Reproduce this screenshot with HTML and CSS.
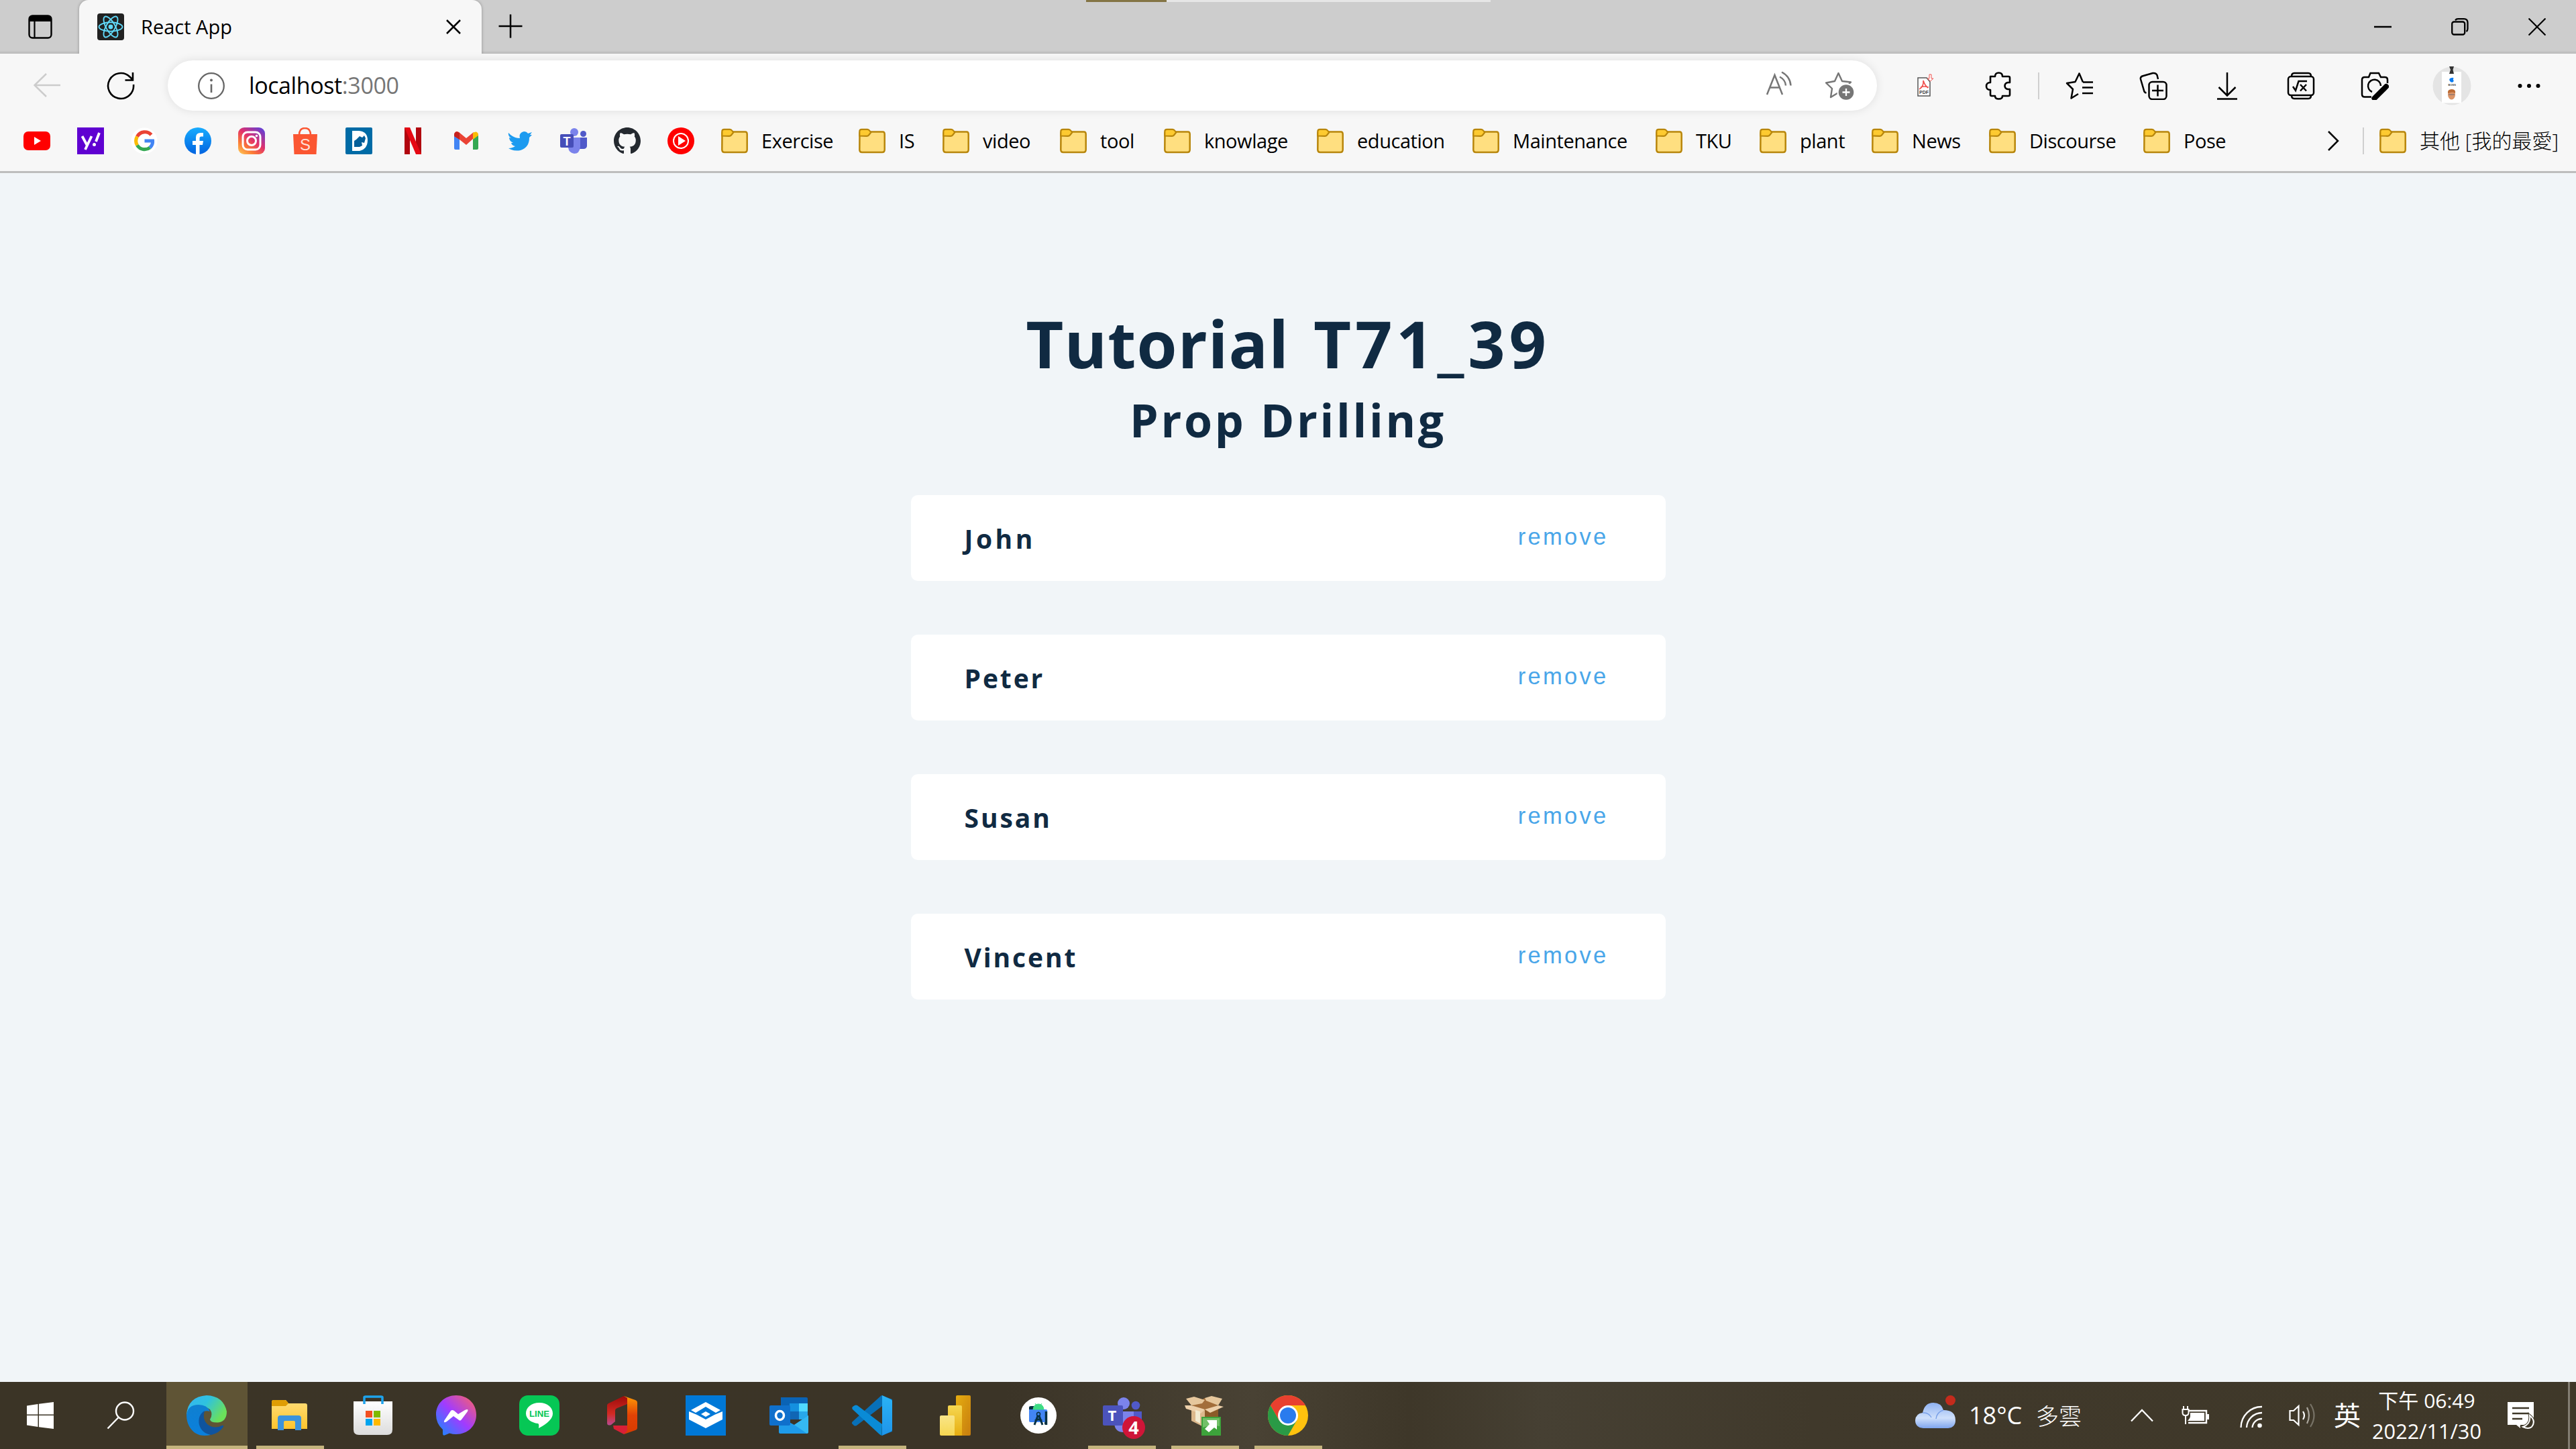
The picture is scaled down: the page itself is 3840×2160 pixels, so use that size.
FILE: index.html
```html
<!DOCTYPE html>
<html lang="zh-Hant">
<head>
<meta charset="utf-8">
<title>React App</title>
<link rel="stylesheet" href="styles.css">
</head>
<body>
<svg class="defs" width="0" height="0" aria-hidden="true">
  <defs>
    <symbol id="folder" viewBox="0 0 40 40">
      <path d="M1.5 9Q1.500 6.500 4 6.500H36Q38.700 6.500 38.700 10V33Q38.700 37 35 37H5Q1.300 37 1.300 33Z" fill="#ffdf80" stroke="#b8860b" stroke-width="2.500"/>
      <path d="M1.300 12.500V6Q1.300 2.800 4.500 2.800H13Q15 2.800 16.500 5L18.200 7.500L15 11.500Q14 12.800 12 12.800Z" fill="#fdca30" stroke="#b8860b" stroke-width="2.200"/>
    </symbol>
    <linearGradient id="ig" x1="0" y1="1" x2=".8" y2="0"><stop offset="0" stop-color="#ffd05a"/><stop offset=".3" stop-color="#fb7a35"/><stop offset=".6" stop-color="#e1306c"/><stop offset="1" stop-color="#6a3fd0"/></linearGradient>
    <linearGradient id="fb" x1="0" y1="0" x2="0" y2="1"><stop offset="0" stop-color="#18acfe"/><stop offset="1" stop-color="#0163e0"/></linearGradient>
    <linearGradient id="edgeA" x1="0" y1="0" x2="1" y2=".5"><stop offset="0" stop-color="#36b4f2"/><stop offset=".5" stop-color="#2fc2df"/><stop offset="1" stop-color="#6be05a"/></linearGradient>
    <linearGradient id="edgeB" x1="0" y1="0" x2="0" y2="1"><stop offset="0" stop-color="#0f7fd0"/><stop offset="1" stop-color="#0a80dd"/></linearGradient>
    <linearGradient id="msg" x1="0" y1="1" x2="1" y2="0"><stop offset="0" stop-color="#0a91ff"/><stop offset=".5" stop-color="#a13bff"/><stop offset="1" stop-color="#ff6560"/></linearGradient>
    <linearGradient id="fold" x1="0" y1="0" x2="0" y2="1"><stop offset="0" stop-color="#ffdd78"/><stop offset="1" stop-color="#fdc42c"/></linearGradient>
    <linearGradient id="bag" x1="0" y1="0" x2="0" y2="1"><stop offset="0" stop-color="#fff"/><stop offset="1" stop-color="#dcdcdc"/></linearGradient>
    <linearGradient id="offL" x1="0" y1="0" x2="0" y2="1"><stop offset="0" stop-color="#9d0b0b"/><stop offset=".6" stop-color="#d22a22"/><stop offset="1" stop-color="#b94a92"/></linearGradient>
    <linearGradient id="offR" x1="0" y1="0" x2="0" y2="1"><stop offset="0" stop-color="#ff9a05"/><stop offset=".5" stop-color="#e24205"/><stop offset="1" stop-color="#d83b01"/></linearGradient>
    <linearGradient id="vs" x1="0" y1="0" x2="0" y2="1"><stop offset="0" stop-color="#2ab3f6"/><stop offset="1" stop-color="#1f95ea"/></linearGradient>
    <linearGradient id="pb1" x1="0" y1="0" x2="1" y2="1"><stop offset="0" stop-color="#e6ad10"/><stop offset="1" stop-color="#c67d0f"/></linearGradient>
    <linearGradient id="pb2" x1="0" y1="0" x2="0" y2="1"><stop offset="0" stop-color="#f6d751"/><stop offset="1" stop-color="#e6ad10"/></linearGradient>
    <linearGradient id="pb3" x1="0" y1="0" x2="0" y2="1"><stop offset="0" stop-color="#f9e589"/><stop offset="1" stop-color="#f6d751"/></linearGradient>
    <linearGradient id="cloud" x1="0" y1="0" x2="0" y2="1"><stop offset="0" stop-color="#8fb2f2"/><stop offset=".6" stop-color="#cfe0fb"/><stop offset="1" stop-color="#7fa5ee"/></linearGradient>
  </defs>
</svg>

<header class="browser">
  <div class="tabstrip">
    <div class="tab-actions">
      <svg class="ic" width="40" height="40" viewBox="0 0 40 40"><rect x="3.500" y="3.500" width="33" height="33" rx="5" fill="none" stroke="#000" stroke-width="2.400"/><path d="M3 12V8Q3 3 8 3H32Q37 3 37 8V12Z"/><path d="M11.500 12V36" stroke="#000" stroke-width="2.200"/></svg>
    </div>
    <div class="tab">
      <svg class="favicon" width="40" height="40" viewBox="0 0 40 40"><rect width="40" height="40" rx="4" fill="#222"/><g fill="none" stroke="#61dafb" stroke-width="1.900"><ellipse cx="20" cy="20" rx="17.500" ry="6.700"/><ellipse cx="20" cy="20" rx="17.500" ry="6.700" transform="rotate(60 20 20)"/><ellipse cx="20" cy="20" rx="17.500" ry="6.700" transform="rotate(120 20 20)"/></g><circle cx="20" cy="20" r="3.400" fill="#61dafb"/></svg>
      <span class="tab-title">React App</span>
      <svg class="tab-close" width="24" height="24" viewBox="0 0 24 24"><path d="M2 2L22 22M22 2L2 22" stroke="#000" stroke-width="2.500"/></svg>
    </div>
    <svg class="new-tab" width="36" height="36" viewBox="0 0 36 36"><path d="M18 .500V35.500M.500 18H35.500" stroke="#000" stroke-width="2.500"/></svg>
    <div class="window-controls">
      <svg width="26" height="26" viewBox="0 0 26 26"><path d="M0 13H26" stroke="#000" stroke-width="2.500"/></svg>
      <svg width="26" height="26" viewBox="0 0 26 26" fill="none" stroke="#000" stroke-width="2.300"><rect x="1.200" y="5.500" width="19" height="19" rx="3"/><path d="M6 3.200Q7.500 1.200 10 1.200H19Q24.500 1.200 24.500 7V16Q24.500 18.500 22.500 20"/></svg>
      <svg width="26" height="26" viewBox="0 0 26 26"><path d="M.500 .500L25.500 25.500M25.500 .500L.500 25.500" stroke="#000" stroke-width="2.200"/></svg>
    </div>
    <div class="strip"><i class="strip-on"></i><i class="strip-off"></i></div>
  </div>

  <div class="toolbar">
    <div class="cell"><svg width="40" height="40" viewBox="0 0 40 40" fill="none" stroke="#ccc" stroke-width="2.500"><path d="M40 19H1.500M19 2L1.500 19L19 36"/></svg></div>
    <div class="cell"><svg width="42" height="42" viewBox="0 0 42 42" fill="none" stroke="#000" stroke-width="2.600"><path d="M40 19A19 19 0 1 1 34.500 7.500L39 12M39 1V12.500H27.500"/></svg></div>
    <div class="address">
      <svg width="40" height="40" viewBox="0 0 40 40" fill="none" stroke="#666" stroke-width="2.300"><circle cx="20" cy="20" r="18.800"/><path d="M20 17.500V30" stroke-width="2.600"/><circle cx="20" cy="11.500" r="2" fill="#666" stroke="none"/></svg>
      <span class="url">localhost<span class="port">:3000</span></span>
      <svg class="read" width="40" height="40" viewBox="0 0 40 40" fill="none" stroke="#767676" stroke-width="2.500"><path d="M2 35L13.500 6L25 35M6.500 24.500H20.500M21 8.500Q29.500 13 30 21.500M24 1.500Q36.500 8 37.500 21.500"/></svg>
      <svg width="44" height="44" viewBox="0 0 44 44"><path d="M20.500 3L26 15L39 16.500L30 25L32 38L20.500 32L9 39L11 26L2 17.500L15 15Z" fill="none" stroke="#767676" stroke-width="2.400" stroke-linejoin="round"/><circle cx="32" cy="31.500" r="13.500" fill="#fff"/><circle cx="32" cy="31.500" r="11.300" fill="#767676"/><path d="M32 26V37M26.500 31.500H37.500" stroke="#fff" stroke-width="2.300"/></svg>
    </div>
    <div class="cell pdf"><svg width="28" height="36" viewBox="0 0 28 36"><path d="M2 6H15L20 12V33H2Z" fill="#fff" stroke="#555" stroke-width="1.500"/><path d="M10 10Q12 17 17 21M10 10Q11 19 4 23M6 20Q11 18 18 20" fill="none" stroke="#f0524f" stroke-width="1.700"/><path d="M22 1V7H25L20.500 11L16.500 7H19V1Z" fill="#fff" stroke="#f0524f"/><text x="4" y="30" font-family="Liberation Sans" font-size="7" font-weight="700" fill="#444">PDF</text></svg></div>
    <div class="cell"><svg width="40" height="42" viewBox="0 0 40 42" fill="none" stroke="#000" stroke-width="2.600" stroke-linejoin="round"><path d="M8 7H15Q15 1.500 20.500 1.500Q26 1.500 26 7H35Q37 7 37 9V16H34Q29.500 17 29.500 21Q29.500 25 34 26H37V34Q37 36 35 36H26Q26 40.500 20.500 40.500Q15 40.500 15 36H10Q8 36 8 34V27Q2 27 2 21.500Q2 16 8 16Z"/></svg></div>
    <i class="sep"></i>
    <div class="cell"><svg width="42" height="42" viewBox="0 0 42 42" fill="none" stroke="#000" stroke-width="2.500" stroke-linejoin="round"><path d="M26 15.500L20.500 2.500L14.500 15L2 17L11 26L8.500 39.500L19 33M26 15.500H41M25 23.500H41M25 32H41"/></svg></div>
    <div class="cell"><svg width="42" height="42" viewBox="0 0 42 42" fill="none" stroke="#000" stroke-width="2.500"><rect x="14.500" y="15" width="26" height="26" rx="5"/><path d="M27.500 19.500V36.500M19 28H36M10.500 31.500Q7.500 31 7 28L2 11Q1.300 8 4.500 6.500L20 2Q25 1.300 26.500 5L28 11"/></svg></div>
    <div class="cell"><svg width="42" height="42" viewBox="0 0 42 42" fill="none" stroke="#000" stroke-width="2.500"><path d="M21 1V35M8.500 23L21 35.500L33.500 23M6 40.500H36"/></svg></div>
    <div class="cell"><svg width="42" height="42" viewBox="0 0 42 42" fill="none" stroke="#000" stroke-width="2.500"><rect x="2" y="7" width="38" height="28" rx="4"/><path d="M7 7Q7 2 11 2H32Q36 2 36 7M7 35Q7 40 11 40H32Q36 40 36 35M9 22L13 28L17.500 14H30M20 19L29 28.500M29 19L20 28.500"/></svg></div>
    <div class="cell"><svg width="42" height="42" viewBox="0 0 42 42" fill="none" stroke="#000" stroke-width="2.500"><path d="M16 37.500H6Q2 37.500 2 33.500V12Q2 8 6 8H12L14.500 2H27L30 8H36Q40 8 40 12V17"/><path d="M17 30A9.500 9.500 0 1 1 30 21"/><path d="M38 22L23 37L20.500 39.500" stroke-width="8" stroke-linecap="round"/></svg></div>
    <div class="cell profile"><svg width="58" height="58" viewBox="0 0 58 58"><circle cx="29" cy="29" r="28.500" fill="#e4e4e4"/><path d="M14 8H43V54.500H14Z" fill="#fff"/><path d="M25 0H32L30.500 5L32 11H25L27 5Z" fill="#333"/><path d="M29 17Q31 16 31.500 18Q30 20 32 21.500Q30 25 27 23Q24 20 26 18Q28 17 29 17Z" fill="#087bf0"/><text x="23.500" y="29" font-family="Liberation Sans" font-size="4" font-weight="700" fill="#444">BOSS</text><ellipse cx="28.500" cy="42" rx="5.500" ry="7.500" fill="#db9568"/><path d="M23 40Q22 34 29 34Q35 34 34 40Q31 37 23 40Z" fill="#bd6c35"/><path d="M24 42H33" stroke="#6c6670"/></svg></div>
    <div class="cell more"><svg width="36" height="8" viewBox="0 0 36 8"><circle cx="4.500" cy="4" r="3"/><circle cx="18" cy="4" r="3"/><circle cx="31.500" cy="4" r="3"/></svg></div>
  </div>

  <nav class="bookmarks">
    <svg class="bi" viewBox="0 0 40 40"><rect y="6" width="40" height="28" rx="7" fill="#f00"/><path d="M16 14L26 20L16 26Z" fill="#fff"/></svg>
    <svg class="bi" viewBox="0 0 40 40"><rect width="40" height="40" fill="#5f01d1"/><g fill="none" stroke="#fff" stroke-width="3.800"><path d="M7.500 13L14.500 26M21.500 13L12 33M33 8L28 21"/></g><circle cx="25.500" cy="25.500" r="2.500" fill="#fff"/></svg>
    <svg class="bi" viewBox="0 0 40 40"><circle cx="20" cy="20" r="19.500" fill="#fff"/><g fill="none" stroke-width="5.200"><path d="M30.500 11A13 13 0 0 0 9.500 13.500" stroke="#ea4335"/><path d="M9.500 13.500A13 13 0 0 0 9.500 26.500" stroke="#fbbc05"/><path d="M9.500 26.500A13 13 0 0 0 28.500 30" stroke="#34a853"/><path d="M28.500 30Q33 26 32.500 20H20.500" stroke="#4285f4"/></g></svg>
    <svg class="bi" viewBox="0 0 40 40"><circle cx="20" cy="20" r="20" fill="url(#fb)"/><path d="M17 40V26H12V20H17V15Q17 8 24 8H28V13.500H25Q22.500 13.500 22.500 16V20H28L27 26H22.500V40Z" fill="#fff"/></svg>
    <svg class="bi" viewBox="0 0 40 40"><rect width="40" height="40" rx="9" fill="url(#ig)"/><g fill="none" stroke="#fff" stroke-width="3"><rect x="7" y="7" width="26" height="26" rx="7"/><circle cx="20" cy="20" r="6.500"/></g><circle cx="27.500" cy="12.500" r="1.800" fill="#fff"/></svg>
    <svg class="bi" viewBox="0 0 40 40"><path d="M2 10H38L36.500 40H3.500Z" fill="#fb5632"/><path d="M11 11Q11 1 19.500 1Q28 1 28 11" fill="none" stroke="#fb5632" stroke-width="2.500"/><text x="12" y="34" font-family="Liberation Sans" font-size="24" fill="#ffe0d8">S</text></svg>
    <svg class="bi" viewBox="0 0 40 40"><rect width="40" height="40" rx="2" fill="#006ba6"/><path d="M10 5H20Q33 6 33 19Q33 32 21 35H10Z" fill="#fff"/><path d="M13 20L16 18L21 13L25 15L28 12L30 16L28 23L24 22L25 27L21 29H13Z" fill="#045f99"/></svg>
    <svg class="bi" viewBox="0 0 40 40"><path d="M8 0H16V40H8ZM25 0H33V40H25Z" fill="#b1060f"/><path d="M8 0H16L33 40H25Z" fill="#e50914"/></svg>
    <svg class="bi" viewBox="0 0 40 40"><path d="M2 12L10 17V33H4Q2 33 2 31Z" fill="#4285f4"/><path d="M30 17L38 11V31Q38 33 36 33H30Z" fill="#34a853"/><path d="M2 13V10Q4 4 9 7L20 16L31 7L30 17L20 26L10 18Z" fill="#ea4335"/><path d="M2 10Q4 4 10 8V18L2 13Z" fill="#c5221f"/><path d="M30 8Q36 4 38 10V12L30 18Z" fill="#fbbc04"/></svg>
    <svg class="bi" viewBox="0 0 40 40"><path d="M3 8Q10 16 20 16Q18 8 26 6Q30 6 32 9L38 7L35 11L38 11L34 15Q34 30 21 34Q11 36 3 31Q9 31 13 28Q8 27 7 23H10Q4 20 4 15L7 16Q2 13 3 8Z" fill="#1d9bf0"/></svg>
    <svg class="bi" viewBox="0 0 40 40"><circle cx="21" cy="7" r="6" fill="#7b83eb"/><circle cx="34.500" cy="9.500" r="4.500" fill="#5059c9"/><path d="M28 15H40V28Q39 32 35 32H28Z" fill="#5059c9"/><path d="M12 15H30V29Q29 39 21 39Q13 38 12 30Z" fill="#7b83eb"/><rect y="10" width="20" height="20" rx="2" fill="#464eb8"/><text x="4.500" y="26.500" font-family="Liberation Sans" font-size="18" font-weight="700" fill="#fff">T</text></svg>
    <svg class="bi" viewBox="0 0 16 16"><path fill="#24292f" d="M8 0C3.580 0 0 3.580 0 8c0 3.540 2.290 6.530 5.470 7.590.4.070.55-.17.55-.38 0-.19-.01-.82-.01-1.490-2.010.37-2.530-.49-2.690-.94-.09-.23-.48-.94-.82-1.130-.28-.15-.68-.52-.01-.53.63-.01 1.080.58 1.230.82.72 1.210 1.870.87 2.330.66.070-.52.28-.87.51-1.070-1.780-.2-3.640-.89-3.640-3.950 0-.87.31-1.590.82-2.150-.08-.2-.36-1.020.08-2.120 0 0 .67-.21 2.200.82.64-.18 1.320-.27 2-.27s1.360.09 2 .27c1.530-1.040 2.200-.82 2.200-.82.44 1.100.16 1.920.08 2.120.51.56.82 1.270.82 2.150 0 3.070-1.870 3.750-3.650 3.950.29.25.54.73.54 1.480 0 1.070-.01 1.930-.01 2.200 0 .21.15.46.55.38A8.010 8.010 0 0 0 16 8c0-4.420-3.580-8-8-8z"/></svg>
    <svg class="bi" viewBox="0 0 40 40"><circle cx="20" cy="20" r="20" fill="#f00"/><circle cx="20" cy="20" r="11" fill="none" stroke="#fff" stroke-width="2"/><path d="M16 13L27 20L16 27Z" fill="#fff"/></svg>
    <a class="bm" style="width:165px"><svg class="bi"><use href="#folder"/></svg>Exercise</a>
    <a class="bm" style="width:85px"><svg class="bi"><use href="#folder"/></svg>IS</a>
    <a class="bm" style="width:135px"><svg class="bi"><use href="#folder"/></svg>video</a>
    <a class="bm" style="width:115px"><svg class="bi"><use href="#folder"/></svg>tool</a>
    <a class="bm" style="width:188px"><svg class="bi"><use href="#folder"/></svg>knowlage</a>
    <a class="bm" style="width:192px"><svg class="bi"><use href="#folder"/></svg>education</a>
    <a class="bm" style="width:233px"><svg class="bi"><use href="#folder"/></svg>Maintenance</a>
    <a class="bm" style="width:115px"><svg class="bi"><use href="#folder"/></svg>TKU</a>
    <a class="bm" style="width:127px"><svg class="bi"><use href="#folder"/></svg>plant</a>
    <a class="bm" style="width:135px"><svg class="bi"><use href="#folder"/></svg>News</a>
    <a class="bm" style="width:190px"><svg class="bi"><use href="#folder"/></svg>Discourse</a>
    <a class="bm" style="width:125px"><svg class="bi"><use href="#folder"/></svg>Pose</a>
    <div class="bm-end">
      <svg width="18" height="30" viewBox="0 0 18 30" fill="none" stroke="#000" stroke-width="2.500"><path d="M2 1L16 15L2 29"/></svg>
      <i class="sep"></i>
      <a class="bm others"><svg class="bi"><use href="#folder"/></svg>其他 [我的最愛]</a>
    </div>
  </nav>
</header>

<main class="page">
  <h1><span class="word-a">Tutorial</span> <span class="word-b">T71_39</span></h1>
  <h2>Prop Drilling</h2>
  <section class="people">
    <article class="item"><h4 class="loose">John</h4><button>remove</button></article>
    <article class="item"><h4>Peter</h4><button>remove</button></article>
    <article class="item"><h4>Susan</h4><button>remove</button></article>
    <article class="item"><h4>Vincent</h4><button>remove</button></article>
  </section>
</main>

<footer class="taskbar">
  <div class="sys"><svg width="40" height="40" viewBox="0 0 40 40" fill="#fff"><path d="M0 5.500L16.500 3V18.500H0ZM18 2.700L40 0V18.500H18ZM0 20H16.500V37L0 34.500ZM18 20H40V40L18 37.300Z"/></svg></div>
  <div class="sys"><svg width="42" height="42" viewBox="0 0 42 42" fill="none" stroke="#fff" stroke-width="2.400"><circle cx="27" cy="14.500" r="13"/><path d="M17.500 24L1.500 40.500"/></svg></div>
  <div class="app active"><svg viewBox="0 0 60 60"><path d="M0 29Q2 2 30 0Q55 1 60 24Q60 39 47 40.500Q36 41 35 36Q40 28 35 21Q20 10 0 29Z" fill="url(#edgeA)"/><path d="M0 29Q2 14 18 14Q31 14 35 24Q26 21 22 29Q16 48 36 59Q14 64 4 46Q0 39 0 29Z" fill="url(#edgeB)"/><path d="M27 23Q16 30 19 44Q23 57 37 59Q49 56 55 47Q56 44 53 45Q41 51 31 43Q23 35 27 23Z" fill="#10549e"/></svg></div>
  <div class="app open"><svg viewBox="0 0 60 60"><path d="M3 11Q3 7 6 7H24L28 12H53Q56 12 56 15V50H3Z" fill="url(#fold)"/><path d="M3 9Q3 7 6 7H22Q25 7 28 12L24 16H3Z" fill="#df9d04"/><path d="M12 52V34Q12 30 16 30H43Q47 30 47 34V52H38V40Q38 38 36 38H23Q21 38 21 40V52Z" fill="#3b93dc"/></svg></div>
  <div class="app"><svg viewBox="0 0 60 60"><path d="M17 12V3Q17 2 19 2H42Q44 2 44 3V12" fill="none" stroke="#1ea3ec" stroke-width="3.500"/><path d="M1 9H59V51Q59 59 51 59H9Q1 59 1 51Z" fill="url(#bag)"/><path d="M17 9V13M44 9V13" stroke="#1ea3ec" stroke-width="3.500"/><path d="M19 23H29V33H19Z" fill="#f25022"/><path d="M31 23H41V33H31Z" fill="#7fba00"/><path d="M19 35H29V45H19Z" fill="#00a4ef"/><path d="M31 35H41V45H31Z" fill="#ffb900"/></svg></div>
  <div class="app"><svg viewBox="0 0 60 60"><path d="M30 0C13 0 0 12 0 29Q0 42 10 51V57Q10 61 14 59L20 56.500Q25 58 30 58C47 58 60 46 60 29C60 12 47 0 30 0Z" fill="url(#msg)"/><path d="M12 38L22 23Q24 21 27 23L33 28L43 22Q49 19 47 24L38 36Q36 39 33 36L26 31L16 39Q11 42 12 38Z" fill="#fff"/></svg></div>
  <div class="app"><svg viewBox="0 0 60 60"><rect width="60" height="60" rx="13" fill="#06c755"/><path d="M30 11C18 11 10 18 10 27C10 35 18 41 28 42Q30 43 29 49Q50 38 50 27C50 18 42 11 30 11Z" fill="#fff"/><text x="15" y="32" textLength="30" lengthAdjust="spacingAndGlyphs" font-family="Liberation Sans" font-size="13" font-weight="700" fill="#06c755">LINE</text></svg></div>
  <div class="app"><svg viewBox="0 0 60 60"><path d="M32 1L37 4V13L22 19Q19 20 19 23V39L13 44Q7 46 7 41V15Q7 13 9 12Z" fill="url(#offL)"/><path d="M32 1L49 7Q52 8 52 11V48Q52 51 49 52L32 58L37 50V4Z" fill="url(#offR)"/><path d="M16 45H37V53L32 58L17 50Z" fill="#d92036"/></svg></div>
  <div class="app"><svg viewBox="0 0 60 60"><rect width="60" height="60" fill="#0078d7"/><path d="M30 10L52 22L45 26L30 17L15 26L8 22Z" fill="#fff"/><path d="M5 24L17 29L30 36L43 29L55 24V36L30 49L5 36Z" fill="#fff"/><path d="M23 28L30 24L37 28L30 32Z" fill="#fff"/></svg></div>
  <div class="app"><svg viewBox="0 0 60 60"><path d="M18 3H56Q58 3 58 5V30H18Z" fill="#0a63b5"/><path d="M31 12H45V24H31Z" fill="#1490df"/><path d="M45 12H58V24H45Z" fill="#50d9ff"/><path d="M31 24H45V36H31Z" fill="#1066b5"/><path d="M45 24H58V36H45Z" fill="#28a8ea"/><path d="M15 32L38 44L59 30V55Q59 57 57 57H17Q15 57 15 55Z" fill="#1e9bea"/><path d="M38 44L59 30V55L57 57Z" fill="#35b8f1"/><rect x="1" y="15" width="31" height="30" rx="2" fill="#0f70cc"/><ellipse cx="16.500" cy="30" rx="6" ry="6.500" fill="none" stroke="#fff" stroke-width="3.500"/></svg></div>
  <div class="app open"><svg viewBox="0 0 60 60"><path d="M44 0L60 6V54L44 60L45 44V16L7 45Q5 46 3 45L0 42Q-.500 40 1 39Z" fill="#0870b8"/><path d="M1 21Q-.500 19 1 17L4 15Q6 14 8 15L45 43L44 60L41 58Z" fill="#0a8bd6"/><path d="M45 0L58 6Q60 7 60 9V51Q60 53 58 54L45 60Z" fill="url(#vs)"/></svg></div>
  <div class="app"><svg viewBox="0 0 60 60"><rect x="31" width="22" height="60" rx="2" fill="url(#pb1)"/><path d="M19 17Q19 15 21 15H38Q40 15 40 17V60H19Z" fill="url(#pb2)"/><path d="M7 32Q7 30 9 30H27Q29 30 29 32V60H9Q7 60 7 58Z" fill="url(#pb3)"/></svg></div>
  <div class="app"><svg viewBox="0 0 60 60"><circle cx="30" cy="30" r="27" fill="#fff"/><path d="M16 18Q16 16 19 16H25V22H16ZM39 22H43V43Q42 45 39 43Z" fill="#073042"/><path d="M16 21H41Q44 21 43 25V38Q43 40 41 40H18Q16 40 16 38Z" fill="#4285f4"/><path d="M22 21Q23 13 30 13Q37 13 38 21ZM25 12L27 15M35 12L33 15" fill="#3ddc84" stroke="#3ddc84"/><path d="M24 44L30 28L36 44M25 38Q30 34 35 38" fill="none" stroke="#073042" stroke-width="3"/><circle cx="30" cy="28" r="2.500" fill="#4285f4" stroke="#073042" stroke-width="1.500"/><path d="M41.500 24V44" stroke="#073042" stroke-width="3.500"/></svg></div>
  <div class="app open"><svg viewBox="0 0 60 60"><circle cx="33" cy="12" r="9" fill="#7b83eb"/><circle cx="51" cy="15" r="6.300" fill="#5059c9"/><path d="M44 24H60V42H44Z" fill="#5059c9"/><path d="M20 24H48V42Q46 55 33 55Q20 55 19 42Z" fill="#7b83eb"/><rect x="2" y="15" width="30" height="30" rx="2" fill="#4b53bc"/><text x="9.500" y="37.500" font-family="Open Sans" font-size="22" font-weight="700" fill="#fff">T</text></svg><span class="badge">4</span></div>
  <div class="app open"><svg viewBox="0 0 60 60"><path d="M10 16L30 22V48L10 38Z" fill="#dcb88c"/><path d="M30 20L50 16V38L30 48Z" fill="#8b5a28"/><path d="M10 15L30 4L50 15L30 22Z" fill="#a36e3a"/><path d="M10 15L2 5L14 2L30 7L26 12ZM30 4L40 1L56 5L50 15L32 8Z" fill="#e6c79c"/><path d="M0 15L10 15L30 21L24 27L2 20ZM30 21L50 15L58 17L38 26Z" fill="#edd0aa"/><path d="M16 22L23 24V42L16 38Z" fill="#f2ebd2"/><rect x="25" y="32" width="29" height="28" fill="#3da33b"/><path d="M27 34H52V46Q39 43 27 48Z" fill="#72bf68"/><path d="M33 37H48V51L44 48L36 55L30 50L37 43Z" fill="#fff"/></svg></div>
  <div class="app open"><svg viewBox="0 0 60 60"><circle cx="30" cy="30" r="30" fill="#ffc20e"/><path d="M4 15A30 30 0 0 1 56 15H30L30 30Z" fill="#e8402f"/><path d="M4 15A30 30 0 0 0 30 60L43 37.500L30 30L17 37.500Z" fill="#2a9a46"/><path d="M4 15L17 37.500L30 30V15L20 5Z" fill="#e8402f"/><circle cx="30" cy="30" r="15" fill="#fff"/><circle cx="30" cy="30" r="12" fill="#2a7bee"/></svg></div>

  <div class="tray">
    <svg class="weather" width="62" height="60" viewBox="0 0 62 60"><path d="M12 49Q0 48 0 37Q1 27 11 26Q14 11 27 11Q39 11 42 22Q60 22 60 37Q60 48 49 49Z" fill="url(#cloud)"/><path d="M11 26Q20 25 24 33M42 22Q32 25 31 35" fill="none" stroke="#79a0e8" stroke-width="1.500"/><circle cx="52.500" cy="7.500" r="7.500" fill="#c42b1c"/></svg>
    <span class="temp">18°C</span>
    <span class="cond">多雲</span>
    <div class="ti"><svg width="34" height="20" viewBox="0 0 34 20" fill="none" stroke="#fff" stroke-width="2.300"><path d="M1 18.500L17 2L33 18.500"/></svg></div>
    <div class="ti"><svg width="42" height="30" viewBox="0 0 42 30"><path d="M10 8H37V26H10" fill="none" stroke="#fff" stroke-width="2.400"/><path d="M13 11H34V23H9Q13 19 13 16ZM38 13H41V21H38Z" fill="#fff"/><path d="M3 1V6M9 1V6M1.500 6H10.500V11Q10.500 15 6 15Q1.500 15 1.500 11ZM6 15V28" fill="none" stroke="#fff" stroke-width="2"/></svg></div>
    <div class="ti wifi"><svg width="34" height="34" viewBox="0 0 34 34" fill="none" stroke="#fff" stroke-width="2.300"><path d="M1.500 33A31 31 0 0 1 33 2M10 33A23 23 0 0 1 33 11M18.500 33A14 14 0 0 1 33 20"/><circle cx="29.500" cy="30" r="3.300" fill="#fff" stroke="none"/></svg></div>
    <div class="ti"><svg width="42" height="38" viewBox="0 0 42 38" fill="none" stroke="#fff" stroke-width="2.200"><path d="M1.500 12V26H7L14.500 33V5L7 12ZM21 13Q25 19 21 25"/><path d="M27 7Q33 19 27 31" stroke="#aaa69d"/><path d="M32 2Q43 19 32 36" stroke="#777266"/></svg></div>
    <span class="ime">英</span>
    <div class="clock"><span class="time">下午 06:49</span><span>2022/11/30</span></div>
    <div class="ti"><svg width="42" height="42" viewBox="0 0 42 42"><path d="M1 1H40V35H20V40L14 35H1Z" fill="#fff"/><path d="M8 10H33M8 18H33M8 26H23" stroke="#3f3829" stroke-width="2.300"/><path d="M34 21Q44 29 37 38Q32 42 24 38Q36 34 34 21Z" fill="#fff" stroke="#3f3829" stroke-width="4"/><path d="M34 21Q44 29 37 38Q32 42 24 38Q36 34 34 21Z" fill="#3f3829" stroke="#fff" stroke-width="2"/></svg></div>
    <i class="desk"></i>
  </div>
</footer>
</body>
</html>
```
FILE: styles.css
```css
* { box-sizing: border-box; }
html, body { margin: 0; }
body {
  width: 3840px;
  height: 2160px;
  overflow: hidden;
  display: flex;
  flex-direction: column;
  background: #f1f5f8;
  font-family: "Open Sans", "Noto Sans CJK TC", sans-serif;
  color: #000;
}
svg { display: block; flex: none; }
.defs { position: absolute; }

.browser { height: 258px; background: #f7f7f7; border-bottom: 3px solid #bdbdbd; }

.tabstrip {
  position: relative;
  display: flex;
  align-items: center;
  height: 80px;
  background: linear-gradient(#cdcdcd 75px, #b9b9b9);
}
.tab-actions { width: 118px; padding-left: 40px; }
.tab {
  display: flex;
  align-items: center;
  width: 600px;
  height: 80px;
  padding: 0 30px 0 27px;
  border-radius: 14px 14px 0 0;
  background: #f7f7f7;
  box-shadow: 0 0 4px rgba(0, 0, 0, .3);
}
.tab-title { margin-left: 25px; padding-bottom: 2px; font-size: 29px; }
.tab-close { margin-left: auto; }
.new-tab { margin: 0 0 2px 25px; }
.window-controls { display: flex; gap: 89px; margin: 0 45px 0 auto; }
.strip { position: absolute; left: 1619px; top: 0; display: flex; }
.strip i { height: 3px; }
.strip-on { width: 120px; background: #847545; }
.strip-off { width: 483px; background: #e6e6e6; }

.toolbar {
  position: relative;
  display: flex;
  align-items: center;
  height: 95px;
  padding-left: 15px;
  background: #f7f7f7;
}
.cell { display: flex; justify-content: center; width: 110px; flex: none; }
.cell.pdf { margin-left: 16px; padding-left: 4px; }
.cell.profile { margin-left: 5px; }
.cell.more { margin-left: 5px; }
.sep { width: 2px; height: 40px; background: #cfcfcf; }
.toolbar .sep { margin: 0 5px 0 4px; }
.address {
  display: flex;
  align-items: center;
  width: 2548px;
  height: 75px;
  margin-left: 15px;
  padding: 0 34px 0 45px;
  border-radius: 38px;
  background: #fff;
  box-shadow: 0 0 14px rgba(0, 0, 0, .1);
}
.url { margin-left: 36px; padding-bottom: 1px; font-size: 34px; letter-spacing: -.4px; }
.port { color: #767676; }
.read { margin: 0 48px 4px auto; }

.bookmarks { position: relative; display: flex; align-items: center; gap: 40px; height: 70px; padding-left: 35px; }
.bi { width: 40px; height: 40px; }
.bm {
  display: flex;
  align-items: center;
  gap: 20px;
  font-size: 29px;
  line-height: 40px;
  letter-spacing: -.45px;
  white-space: nowrap;
}
.bm-end { display: flex; align-items: center; margin: 0 26px 0 auto; }
.bm-end .sep { margin: 0 23px 0 35px; }
.others { font-size: 30px; font-weight: 300; letter-spacing: 0; }

.page { flex: 1; padding-top: 203px; text-align: center; color: #102a42; }
h1, h2, h4 { margin: 0; font-weight: 700; }
h1 { font-size: 97px; line-height: 100px; letter-spacing: 4px; word-spacing: 7px; }
.word-a { letter-spacing: 1.1px; }
.word-b { letter-spacing: 5.8px; }
h2 { margin-top: 25px; font-size: 68px; line-height: 80px; letter-spacing: 3.7px; }
.people { display: flex; flex-direction: column; gap: 80px; width: 1125px; margin: 72px auto 0; }
.item {
  display: flex;
  align-items: center;
  justify-content: space-between;
  height: 128px;
  padding: 0 85px 0 80px;
  border-radius: 10px;
  background: #fff;
}
.item h4 { padding-top: 2px; font-size: 39px; line-height: 56px; letter-spacing: 2.9px; }
.item .loose { letter-spacing: 4.5px; }
.item button {
  padding: 0 0 3px;
  border: 0;
  background: none;
  font: 34.5px "Liberation Sans", sans-serif;
  letter-spacing: 3.3px;
  color: #49a6e9;
}

.taskbar {
  display: flex;
  height: 100px;
  background: linear-gradient(90deg, #3b3426 0, #3b3427 1500px, #494234 1870px, #3e3729 2100px, #464033 2300px, #40392b 2700px, #3f3829 100%);
}
.sys { display: flex; align-items: center; justify-content: center; width: 120px; }
.sys + .sys { width: 126px; padding-right: 6px; }
.app {
  position: relative;
  display: flex;
  align-items: center;
  justify-content: center;
  width: 124px;
  height: 100px;
}
.app svg { width: 60px; height: 60px; overflow: visible; }
.app.active { width: 121px; margin: 0 1px 0 2px; padding-right: 2px; background: #5f5435; }
.app.active::after, .app.open::after {
  content: "";
  position: absolute;
  bottom: 0;
  left: 0;
  width: 100%;
  height: 5px;
  background: #c5b47d;
}
.app.open::after { left: 12px; width: 101px; }
.badge {
  position: absolute;
  left: 63px;
  top: 51px;
  width: 34px;
  height: 34px;
  border-radius: 50%;
  background: #cf1538;
  color: #fff;
  font-size: 27px;
  font-weight: 700;
  line-height: 33px;
  text-align: center;
}
.tray {
  display: grid;
  grid-template-columns: 80px 100px 115px 85px 76px 90px 64px 68px 168px 113px 26px;
  align-items: center;
  margin-left: auto;
  height: 100px;
  color: #fff;
}
.temp { padding-bottom: 2px; font-size: 36px; }
.cond { padding-bottom: 2px; font-size: 34px; font-weight: 300; }
.ti { display: flex; justify-content: center; }
.wifi { padding-top: 4px; }
.ime { font-size: 40px; line-height: 50px; text-align: center; }
.clock { display: flex; flex-direction: column; align-items: center; padding-left: 1px; font-size: 30.7px; line-height: 46px; }
.time { font-size: 30px; line-height: 45px; }
.desk { justify-self: center; margin-left: 4px; width: 3px; height: 100px; background: #827d72; }
```
